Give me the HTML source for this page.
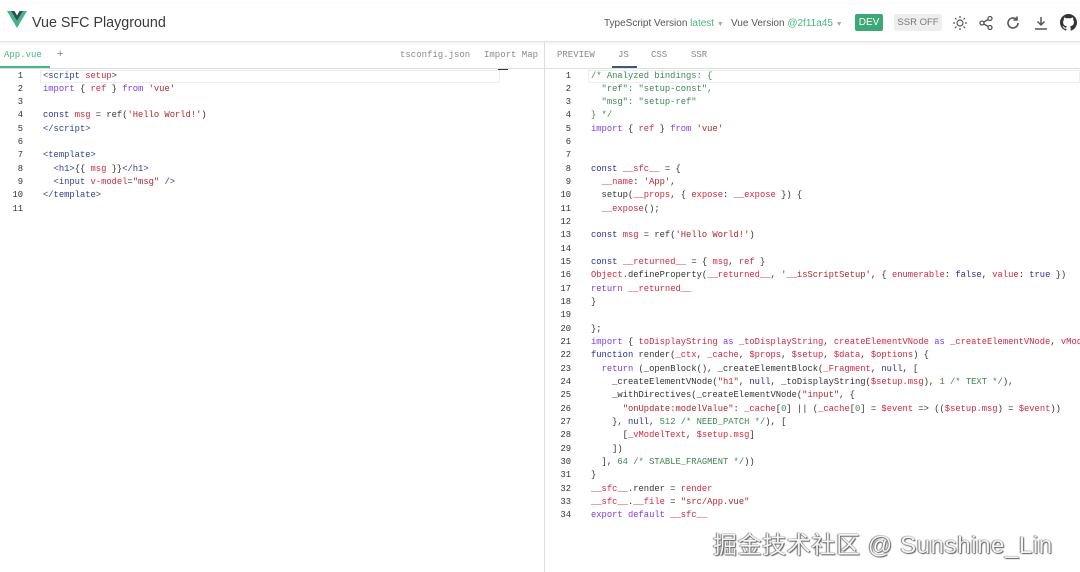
<!DOCTYPE html>
<html><head><meta charset="utf-8"><style>
*{margin:0;padding:0;box-sizing:border-box}
body{width:1080px;height:572px;overflow:hidden;background:#fff;font-family:"Liberation Sans",sans-serif;position:relative;color:#333}
.hdr{position:absolute;left:0;top:4px;width:1080px;height:38px;border-bottom:1px solid #e4e4e4;box-shadow:0 1px 3px rgba(0,0,0,.08)}
.title{position:absolute;left:32px;top:11px;font-size:14.3px;color:#3a3a3a}
.r{position:absolute;top:14px;font-size:10px;color:#555}
.g{color:#42b883}
.mono{font-family:"Liberation Mono",monospace}
.tab{position:absolute;font-size:9px;color:#888;top:50px}
.code{position:absolute;font-family:"Liberation Mono",monospace;font-size:8.8px;line-height:13.33px;white-space:pre;color:#333}
.ln{position:absolute;font-family:"Liberation Mono",monospace;font-size:8.8px;line-height:13.33px;text-align:right;color:#333;white-space:pre}
.k{color:#7c3aed}.s{color:#b4252a}.v{color:#d7263d}.c{color:#3b8a4f}.t{color:#2c3e91}.n{color:#2b2b9e}
</style></head><body>
<div class="hdr">
<svg style="position:absolute;left:7px;top:7px" width="20" height="17" viewBox="0 0 20 17"><path d="M0 0h4l6 10 6-10h4L10 17z" fill="#41b883"/><path d="M4 0h3.5L10 4.5 12.5 0H16l-6 10z" fill="#34495e"/></svg>
<div class="title">Vue SFC Playground</div>
<div class="r" style="left:604px">TypeScript Version <span class="g">latest</span> <span style="color:#aaa;font-size:7px">▼</span></div>
<div class="r" style="left:731px">Vue Version <span class="g">@2f11a45</span> <span style="color:#aaa;font-size:7px">▼</span></div>
<div style="position:absolute;left:855px;top:10px;width:28px;height:17px;background:#3ca877;border-radius:2px;color:#fff;font-size:10px;text-align:center;line-height:17px">DEV</div>
<div style="position:absolute;left:894px;top:10px;width:48px;height:17px;background:#eee;border-radius:2px;color:#777;font-size:9.5px;text-align:center;line-height:17px">SSR OFF</div>
<svg style="position:absolute;left:952px;top:11px" width="16" height="16" viewBox="0 0 16 16" stroke="#555" fill="none" stroke-width="1.2"><circle cx="8" cy="8" r="3"/><path d="M8 1v2M8 13v2M1 8h2M13 8h2M3 3l1.4 1.4M11.6 11.6L13 13M3 13l1.4-1.4M11.6 4.4L13 3"/></svg>
<svg style="position:absolute;left:978px;top:11px" width="16" height="16" viewBox="0 0 16 16" stroke="#555" fill="none" stroke-width="1.3"><circle cx="4" cy="8" r="2"/><circle cx="12" cy="3.5" r="2"/><circle cx="12" cy="12.5" r="2"/><path d="M5.8 7l4.4-2.5M5.8 9l4.4 2.5"/></svg>
<svg style="position:absolute;left:1005px;top:11px" width="16" height="16" viewBox="0 0 16 16" stroke="#555" fill="none" stroke-width="1.6"><path d="M13 8a5 5 0 1 1-1.5-3.6"/><path d="M12 1.5v3.5H8.5"/></svg>
<svg style="position:absolute;left:1033px;top:11px" width="16" height="16" viewBox="0 0 16 16" stroke="#555" fill="none" stroke-width="1.5"><path d="M8 2v8M4.5 6.5L8 10l3.5-3.5M2 14h12"/></svg>
<svg style="position:absolute;left:1060px;top:10px" width="17" height="17" viewBox="0 0 16 16"><path fill="#333" d="M8 0C3.58 0 0 3.58 0 8c0 3.54 2.290 6.53 5.47 7.59.4.07.55-.17.55-.38 0-.19-.01-.82-.01-1.49-2.01.37-2.530-.49-2.69-.94-.09-.23-.48-.94-.82-1.13-.28-.15-.68-.52-.01-.53.63-.01 1.08.58 1.23.82.72 1.21 1.87.87 2.33.66.07-.52.28-.87.51-1.07-1.78-.2-3.64-.89-3.64-3.95 0-.87.31-1.59.82-2.15-.08-.2-.36-1.02.08-2.12 0 0 .67-.21 2.2.82.64-.18 1.32-.27 2-.27.68 0 1.36.09 2 .27 1.53-1.04 2.2-.82 2.2-.82.44 1.1.16 1.92.08 2.12.51.56.82 1.27.82 2.15 0 3.07-1.87 3.75-3.65 3.95.29.25.54.73.54 1.48 0 1.07-.01 1.93-.01 2.2 0 .21.15.46.55.38A8.013 8.013 0 0016 8c0-4.42-3.58-8-8-8z"/></svg>
</div>
<div style="position:absolute;left:0;top:68px;width:1080px;border-top:1px solid #e0e0e0"></div>
<div style="position:absolute;left:544px;top:42px;height:530px;border-left:1px solid #ddd"></div>
<div class="tab mono" style="left:4px;color:#42b883">App.vue</div>
<div style="position:absolute;left:0;top:66px;width:50px;height:2px;background:#42b883"></div>
<div class="tab" style="left:57px;font-size:11px;top:48px">+</div>
<div class="tab mono" style="left:400px">tsconfig.json</div>
<div class="tab mono" style="left:484px">Import Map</div>
<div class="tab mono" style="left:557px">PREVIEW</div>
<div class="tab mono" style="left:618px">JS</div>
<div style="position:absolute;left:612px;top:66px;width:25px;height:2px;background:#3b5a7a"></div>
<div class="tab mono" style="left:651px">CSS</div>
<div class="tab mono" style="left:691px">SSR</div>
<div style="position:absolute;left:498px;top:69px;width:10px;height:1px;background:#333"></div>
<div style="position:absolute;left:40px;top:70px;width:460px;height:13px;border:1px solid #eee"></div>
<div style="position:absolute;left:588px;top:70px;width:492px;height:13px;border:1px solid #eee"></div>

<div class="ln" style="left:0;width:23px;top:69.5px">1
2
3
4
5
6
7
8
9
10
11</div>
<div class="code" style="left:43px;top:69.5px"><span class="t">&lt;script</span> <span class="v">setup</span><span class="t">&gt;</span>
<span class="k">import</span> { <span class="v">ref</span> } <span class="k">from</span> <span class="s">'vue'</span>

<span class="n">const</span> <span class="v">msg</span> = ref(<span class="s">'Hello World!'</span>)
<span class="t">&lt;/script&gt;</span>

<span class="t">&lt;template&gt;</span>
  <span class="t">&lt;h1&gt;</span>{{ <span class="v">msg</span> }}<span class="t">&lt;/h1&gt;</span>
  <span class="t">&lt;input</span> <span class="v">v-model</span>=<span class="s">"msg"</span> <span class="t">/&gt;</span>
<span class="t">&lt;/template&gt;</span>
</div>

<div class="ln" style="left:548px;width:23px;top:69.5px">1
2
3
4
5
6
7
8
9
10
11
12
13
14
15
16
17
18
19
20
21
22
23
24
25
26
27
28
29
30
31
32
33
34</div>
<div class="code" style="left:591px;top:69.5px"><span class="c">/* Analyzed bindings: {
  "ref": "setup-const",
  "msg": "setup-ref"
} */</span>
<span class="k">import</span> { <span class="v">ref</span> } <span class="k">from</span> <span class="s">'vue'</span>


<span class="n">const</span> <span class="v">__sfc__</span> = {
  <span class="v">__name</span>: <span class="s">'App'</span>,
  setup(<span class="v">__props</span>, { <span class="v">expose</span>: <span class="v">__expose</span> }) {
  <span class="v">__expose</span>();

<span class="n">const</span> <span class="v">msg</span> = ref(<span class="s">'Hello World!'</span>)

<span class="n">const</span> <span class="v">__returned__</span> = { <span class="v">msg</span>, <span class="v">ref</span> }
<span class="v">Object</span>.defineProperty(<span class="v">__returned__</span>, <span class="s">'__isScriptSetup'</span>, { <span class="v">enumerable</span>: <span class="n">false</span>, <span class="v">value</span>: <span class="n">true</span> })
<span class="k">return</span> <span class="v">__returned__</span>
}

};
<span class="k">import</span> { <span class="v">toDisplayString</span> <span class="k">as</span> <span class="v">_toDisplayString</span>, <span class="v">createElementVNode</span> <span class="k">as</span> <span class="v">_createElementVNode</span>, <span class="v">vModelText</span>
<span class="n">function</span> render(<span class="v">_ctx</span>, <span class="v">_cache</span>, <span class="v">$props</span>, <span class="v">$setup</span>, <span class="v">$data</span>, <span class="v">$options</span>) {
  <span class="k">return</span> (_openBlock(), _createElementBlock(<span class="v">_Fragment</span>, <span class="n">null</span>, [
    _createElementVNode(<span class="s">"h1"</span>, <span class="n">null</span>, _toDisplayString(<span class="v">$setup.msg</span>), <span class="c">1 /* TEXT */</span>),
    _withDirectives(_createElementVNode(<span class="s">"input"</span>, {
      <span class="s">"onUpdate:modelValue"</span>: <span class="v">_cache</span>[<span class="c">0</span>] || (<span class="v">_cache</span>[<span class="c">0</span>] = <span class="v">$event</span> =&gt; ((<span class="v">$setup.msg</span>) = <span class="v">$event</span>))
    }, <span class="n">null</span>, <span class="c">512 /* NEED_PATCH */</span>), [
      [<span class="v">_vModelText</span>, <span class="v">$setup.msg</span>]
    ])
  ], <span class="c">64 /* STABLE_FRAGMENT */</span>))
}
<span class="v">__sfc__</span>.render = <span class="v">render</span>
<span class="v">__sfc__</span>.<span class="v">__file</span> = <span class="s">"src/App.vue"</span>
<span class="k">export</span> <span class="k">default</span> <span class="v">__sfc__</span></div>

<div style="position:absolute;left:713px;top:525px;font-family:'Liberation Sans','Noto Sans CJK SC',sans-serif;font-size:24px;letter-spacing:0.6px;color:#f4f4f4;white-space:nowrap;text-shadow:0 0 1px #444,1px 1px 1px #666,-1px 0 1px #888">掘金技术社区 @ Sunshine_Lin</div>
</body></html>
